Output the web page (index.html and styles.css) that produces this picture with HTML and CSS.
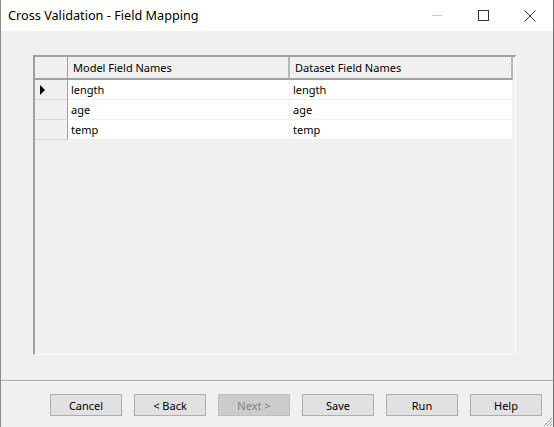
FILE: index.html
```html
<!DOCTYPE html>
<html lang="en">
<head>
  <meta charset="UTF-8" />
  <title>Cross Validation - Field Mapping</title>
  <link rel="stylesheet" href="styles.css">
</head>
<body>
  <div class="window">
    <div class="titlebar">
      <span class="title">Cross Validation - Field Mapping</span>
      <div class="controls">
        <svg class="ctl" width="46" height="31" viewBox="0 0 46 31"><line x1="17" y1="15.5" x2="27" y2="15.5" stroke="#c8c8c8" stroke-width="1"/></svg>
        <svg class="ctl" width="46" height="31" viewBox="0 0 46 31"><rect x="17.5" y="10.5" width="10" height="10" fill="none" stroke="#333" stroke-width="1"/></svg>
        <svg class="ctl" width="46" height="31" viewBox="0 0 46 31"><path d="M17.5 10.5 L28.5 21.5 M28.5 10.5 L17.5 21.5" stroke="#333" stroke-width="1" fill="none"/></svg>
      </div>
    </div>

    <div class="content">
      <div class="grid">
        <div class="corner"></div>
        <div class="colhead">Model Field Names</div>
        <div class="colhead">Dataset Field Names</div>

        <div class="rowhead current"><span class="arrow"></span></div>
        <div class="cell">length</div>
        <div class="cell">length</div>

        <div class="rowhead"></div>
        <div class="cell">age</div>
        <div class="cell">age</div>

        <div class="rowhead"></div>
        <div class="cell">temp</div>
        <div class="cell">temp</div>
      </div>
    </div>

    <div class="footer">
      <button class="btn">Cancel</button>
      <button class="btn">&lt; Back</button>
      <button class="btn" disabled>Next &gt;</button>
      <button class="btn">Save</button>
      <button class="btn">Run</button>
      <button class="btn">Help</button>
    </div>

    <svg class="grip" width="12" height="12" viewBox="0 0 12 12">
      <path d="M11 3 L3 11 M11 6 L6 11 M11 9 L9 11" stroke="#a0a0a0" stroke-width="1" fill="none"/>
    </svg>
  </div>
</body>
</html>
```

FILE: styles.css
```css
body {
  margin: 0;
  background: #fff;
  font-family: "Noto Sans", "Open Sans", sans-serif;
  font-size: 11px;
  color: #000;
}
.window {
  position: relative;
  width: 554px;
  height: 427px;
  box-sizing: border-box;
  border-left: 1px solid #8a8a8a;
  border-right: 1px solid #6f6f6f;
  background: #f0f0f0;
  display: flex;
  flex-direction: column;
  overflow: hidden;
}
.titlebar {
  height: 31px;
  flex: none;
  background: #fff;
  display: flex;
  align-items: center;
  padding-left: 7px;
}
.title {
  font-size: 12.7px;
  flex: 1;
  margin-top: -1px;
}
.controls {
  display: flex;
  align-self: stretch;
}
.ctl {
  display: block;
}
.content {
  flex: 1;
  padding: 24px 0 0 32px;
}
.grid {
  width: 483px;
  height: 300px;
  box-sizing: border-box;
  border-top: 2px solid #a0a0a0;
  border-left: 2px solid #a0a0a0;
  border-right: 1px solid #fcfcfc;
  border-bottom: 1px solid #fcfcfc;
  display: grid;
  grid-template-columns: 33px 222px 223px;
  grid-auto-rows: 20px;
  grid-template-rows: 23px;
  align-content: start;
}
.corner, .colhead {
  background: #f0f0f0;
  border-right: 1px solid #a0a0a0;
  border-bottom: 2px solid #a0a0a0;
  box-sizing: border-box;
}
.colhead {
  padding: 3px 0 0 5px;
  border-right: 2px solid #b8b8b8;
}
.colhead:last-of-type {
  border-right: 1px solid #a0a0a0;
}
.rowhead {
  background: #f0f0f0;
  border-right: 1px solid #a0a0a0;
  border-bottom: 1px solid #d8d8d8;
  box-sizing: border-box;
  position: relative;
}
.arrow {
  position: absolute;
  left: 5px;
  top: 5px;
  border-left: 5px solid #000;
  border-top: 5px solid transparent;
  border-bottom: 5px solid transparent;
}
.cell {
  background: #fff;
  border-right: 1px solid #f0f0f0;
  border-bottom: 1px solid #f0f0f0;
  box-sizing: border-box;
  padding: 2px 0 0 3px;
}
.footer {
  height: 47px;
  flex: none;
  box-sizing: border-box;
  border-top: 1px solid #a9a9a9;
  box-shadow: inset 0 1px 0 #fafafa;
  padding: 13px 0 0 49px;
  display: flex;
  gap: 12px;
  align-items: flex-start;
}
.btn {
  width: 72px;
  height: 22px;
  font-family: "Noto Sans", "Open Sans", sans-serif;
  font-size: 11px;
  color: #000;
  background: #e1e1e1;
  border: 1px solid #adadad;
  padding: 0;
}
.btn:disabled {
  background: #cccccc;
  border-color: #bfbfbf;
  color: #838383;
}
.grip {
  position: absolute;
  right: 0;
  bottom: 0;
}
```
